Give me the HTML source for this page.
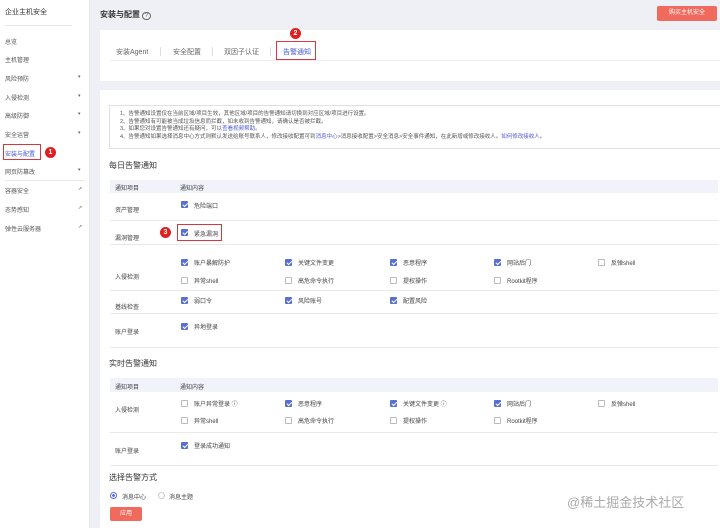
<!DOCTYPE html><html><head><meta charset="utf-8"><style>
*{margin:0;padding:0;box-sizing:border-box}
body{width:720px;height:528px;overflow:hidden;background:#eef0f5;font-family:"Liberation Sans","Noto Sans CJK SC",sans-serif;color:#333;position:relative;font-size:6px}
.a{position:absolute;white-space:nowrap}
.side{left:0;top:0;width:90px;height:528px;background:#fff;border-right:1px solid #e3e5ea}
.si{left:5px;font-size:6px;color:#555}
.ar{left:78px;font-size:5px;color:#666}
.cb{position:absolute;width:7px;height:7px;border:1px solid #bbb;background:#fff;border-radius:1px}
.cb.on{background:#5a6fd6;border-color:#5a6fd6}
.cb.on:after{content:"";position:absolute;left:1.5px;top:0px;width:2px;height:3.5px;border:solid #fff;border-width:0 1px 1px 0;transform:rotate(45deg)}
.lb{font-size:6px;color:#444}
.hl{position:absolute;height:1px;background:#e6e8ee}
.badge{position:absolute;width:11px;height:11px;border-radius:50%;background:#e02020;color:#fff;font-size:7px;text-align:center;line-height:11px;font-weight:bold}
.rbox{position:absolute;border:1.5px solid #d9363e}
</style></head><body>
<div class="a side"></div>
<div class="a" style="left:5px;top:7px;font-size:7px;color:#333">企业主机安全</div>
<div class="hl" style="left:5px;top:25px;width:67px"></div>
<div class="a si" style="top:37px">总览</div>
<div class="a si" style="top:55px">主机管理</div>
<div class="a si" style="top:74px">风险预防</div><div class="a ar" style="top:74px">▾</div>
<div class="a si" style="top:93px">入侵检测</div><div class="a ar" style="top:93px">▾</div>
<div class="a si" style="top:111px">高级防御</div><div class="a ar" style="top:111px">▾</div>
<div class="a si" style="top:130px">安全运营</div><div class="a ar" style="top:130px">▾</div>
<div class="a si" style="top:149px;color:#4a5bd0">安装与配置</div>
<div class="rbox" style="left:3px;top:144px;width:38px;height:16px"></div>
<div class="badge" style="left:45px;top:147px">1</div>
<div class="a si" style="top:167px">网页防篡改</div><div class="a ar" style="top:167px">▾</div>
<div class="hl" style="left:5px;top:180px;width:80px"></div>
<div class="a si" style="top:186px">容器安全</div><div class="a ar" style="top:186px">⇗</div>
<div class="a si" style="top:205px">态势感知</div><div class="a ar" style="top:205px">⇗</div>
<div class="a si" style="top:224px">弹性云服务器</div><div class="a ar" style="top:224px">⇗</div>

<div class="a" style="left:100px;top:9px;font-size:8px;font-weight:bold;color:#333">安装与配置 <span style="font-weight:normal;border:1px solid #666;border-radius:50%;font-size:6px;padding:0 1.5px;color:#666">?</span></div>
<div class="a" style="left:657px;top:6px;width:60px;height:15px;background:#f06a5e;border-radius:2px;color:#fff;font-size:6px;text-align:center;line-height:15px">购买主机安全</div>

<div class="a" style="left:100px;top:30px;width:620px;height:51px;background:#fff"></div>
<div class="hl" style="left:110px;top:60px;width:610px;background:#eee"></div>
<div class="a" style="left:116px;top:47px;font-size:7px;color:#666">安装Agent</div>
<div class="a" style="left:173px;top:47px;font-size:7px;color:#666">安全配置</div>
<div class="a" style="left:224px;top:47px;font-size:7px;color:#666">双因子认证</div>
<div class="a" style="left:283px;top:47px;font-size:7px;color:#4a5bd0">告警通知</div>
<div class="a" style="left:160px;top:47px;width:1px;height:9px;background:#ddd"></div>
<div class="a" style="left:212px;top:47px;width:1px;height:9px;background:#ddd"></div>
<div class="a" style="left:270px;top:47px;width:1px;height:9px;background:#ddd"></div>
<div class="rbox" style="left:276px;top:41px;width:40px;height:19px"></div>
<div class="badge" style="left:290px;top:28px">2</div>

<div class="a" style="left:100px;top:90px;width:620px;height:438px;background:#fff"></div>
<div class="a" style="left:109px;top:105px;width:611px;height:44px;border:1px solid #e0e0e0;border-right:none;font-size:5.5px;color:#555;line-height:7.5px;padding:5px 0 0 10px">
1、告警通知设置仅在当前区域/项目生效，其他区域/项目的告警通知请切换到对应区域/项目进行设置。<br>
2、告警通知有可能被当成垃圾信息而拦截，如未收到告警通知，请确认是否被拦截。<br>
3、如果您对设置告警通知还有疑问，可以<span style="color:#4a5bd0">查看视频帮助</span>。<br>
4、告警通知如果选择消息中心方式则默认发送给账号联系人，修改接收配置可到<span style="color:#4a5bd0">消息中心</span>&gt;消息接收配置&gt;安全消息&gt;安全事件通知，在此新增或修改接收人。<span style="color:#4a5bd0">如何修改接收人</span>。</div>

<div class="a" style="left:109px;top:160px;font-size:8px;color:#333">每日告警通知</div>
<div class="a" style="left:110px;top:180px;width:608px;height:13px;background:#f0f3fa"></div>
<div class="a lb" style="left:115px;top:183px">通知项目</div><div class="a lb" style="left:180px;top:183px">通知内容</div>
<div class="a lb" style="left:115px;top:205px">资产管理</div>
<div class="cb on" style="left:181px;top:201px"></div><div class="a lb" style="left:194px;top:201px">危险端口</div>
<div class="hl" style="left:110px;top:220px;width:608px"></div>
<div class="a lb" style="left:115px;top:233px">漏洞管理</div>
<div class="rbox" style="left:177px;top:224px;width:45px;height:17px"></div>
<div class="badge" style="left:160px;top:227px">3</div>
<div class="cb on" style="left:181px;top:229px"></div><div class="a lb" style="left:194px;top:229px">紧急漏洞</div>
<div class="hl" style="left:110px;top:244px;width:608px"></div>

<div class="a lb" style="left:115px;top:272px">入侵检测</div>
<div class="cb on" style="left:181px;top:259px"></div><div class="a lb" style="left:194px;top:258px">账户暴解防护</div>
<div class="cb on" style="left:285px;top:259px"></div><div class="a lb" style="left:298px;top:258px">关键文件变更</div>
<div class="cb on" style="left:390px;top:259px"></div><div class="a lb" style="left:403px;top:258px">恶意程序</div>
<div class="cb on" style="left:494px;top:259px"></div><div class="a lb" style="left:507px;top:258px">网站后门</div>
<div class="cb" style="left:598px;top:259px"></div><div class="a lb" style="left:611px;top:258px">反弹shell</div>
<div class="cb" style="left:181px;top:277px"></div><div class="a lb" style="left:194px;top:276px">异常shell</div>
<div class="cb" style="left:285px;top:277px"></div><div class="a lb" style="left:298px;top:276px">高危命令执行</div>
<div class="cb" style="left:390px;top:277px"></div><div class="a lb" style="left:403px;top:276px">提权操作</div>
<div class="cb" style="left:494px;top:277px"></div><div class="a lb" style="left:507px;top:276px">Rootkit程序</div>
<div class="hl" style="left:110px;top:290px;width:608px"></div>
<div class="a lb" style="left:115px;top:302px">基线检查</div>
<div class="cb on" style="left:181px;top:297px"></div><div class="a lb" style="left:194px;top:296px">弱口令</div>
<div class="cb on" style="left:285px;top:297px"></div><div class="a lb" style="left:298px;top:296px">风险账号</div>
<div class="cb on" style="left:390px;top:297px"></div><div class="a lb" style="left:403px;top:296px">配置风险</div>
<div class="hl" style="left:110px;top:313px;width:608px"></div>
<div class="a lb" style="left:115px;top:327px">账户登录</div>
<div class="cb on" style="left:181px;top:323px"></div><div class="a lb" style="left:194px;top:322px">异地登录</div>
<div class="hl" style="left:110px;top:347px;width:608px"></div>

<div class="a" style="left:109px;top:358px;font-size:8px;color:#333">实时告警通知</div>
<div class="a" style="left:110px;top:405px;width:0;height:0"></div>
<div class="a" style="left:110px;top:406px;width:608px;height:0"></div>
<div class="a" style="left:110px;top:406px"></div>
<div class="a" style="left:110px;top:406px"></div>
<div class="a" style="left:110px;top:406px"></div>
<div class="a" style="left:110px;top:406px"></div>
<div class="a" style="left:110px;top:406px"></div>
<div class="a" style="left:110px;top:406px"></div>
<div class="a" style="left:110px;top:406px"></div>
<div class="a" style="left:110px;top:378px;width:608px;height:14px;background:#f0f3fa"></div>
<div class="a lb" style="left:115px;top:382px">通知项目</div><div class="a lb" style="left:180px;top:382px">通知内容</div>
<div class="a lb" style="left:115px;top:405px">入侵检测</div>
<div class="cb" style="left:181px;top:400px"></div><div class="a lb" style="left:194px;top:399px">账户异常登录 ⓘ</div>
<div class="cb on" style="left:285px;top:400px"></div><div class="a lb" style="left:298px;top:399px">恶意程序</div>
<div class="cb on" style="left:390px;top:400px"></div><div class="a lb" style="left:403px;top:399px">关键文件变更 ⓘ</div>
<div class="cb on" style="left:494px;top:400px"></div><div class="a lb" style="left:507px;top:399px">网站后门</div>
<div class="cb" style="left:598px;top:400px"></div><div class="a lb" style="left:611px;top:399px">反弹shell</div>
<div class="cb" style="left:181px;top:417px"></div><div class="a lb" style="left:194px;top:416px">异常shell</div>
<div class="cb" style="left:285px;top:417px"></div><div class="a lb" style="left:298px;top:416px">高危命令执行</div>
<div class="cb" style="left:390px;top:417px"></div><div class="a lb" style="left:403px;top:416px">提权操作</div>
<div class="cb" style="left:494px;top:417px"></div><div class="a lb" style="left:507px;top:416px">Rootkit程序</div>
<div class="hl" style="left:110px;top:432px;width:608px"></div>
<div class="a lb" style="left:115px;top:446px">账户登录</div>
<div class="cb on" style="left:181px;top:442px"></div><div class="a lb" style="left:194px;top:441px">登录成功通知</div>
<div class="hl" style="left:110px;top:465px;width:608px"></div>

<div class="a" style="left:109px;top:472px;font-size:8px;color:#333">选择告警方式</div>
<div class="a" style="left:110px;top:492px;width:7px;height:7px;border:1px solid #5a6fd6;border-radius:50%;background:radial-gradient(#5a6fd6 35%,#fff 45%)"></div>
<div class="a lb" style="left:122px;top:492px">消息中心</div>
<div class="a" style="left:158px;top:492px;width:7px;height:7px;border:1px solid #ccc;border-radius:50%"></div>
<div class="a lb" style="left:169px;top:492px">消息主题</div>
<div class="a" style="left:110px;top:507px;width:32px;height:14px;background:#f06a5e;border-radius:2px;color:#fff;font-size:6px;text-align:center;line-height:14px">应用</div>
<div class="a" style="left:567px;top:492px;font-size:13px;color:#aaa">@稀土掘金技术社区</div>
</body></html>
